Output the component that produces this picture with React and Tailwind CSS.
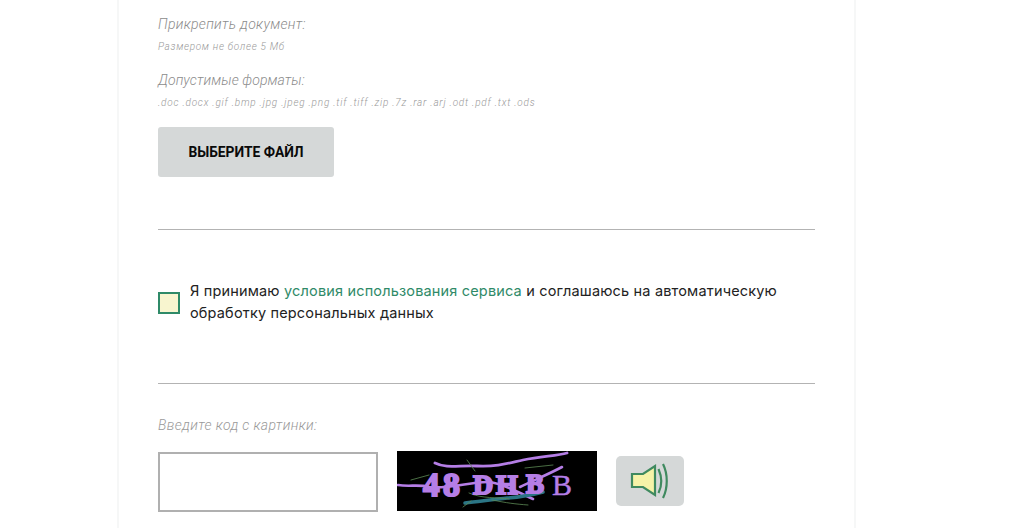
export default function App() {
  const letters = [
    ["4", 26, 45, 33],
    ["8", 46, 45, 34],
    ["D", 76, 43, 28],
    ["H", 99, 43, 28],
    ["B", 129, 42, 27],
  ];
  return (
    <div className="h-[528px] w-[1013px] overflow-hidden bg-white font-['Roboto',sans-serif]">
      <div className="ml-[117px] flex h-[528px] w-[739px] flex-col border-x-2 border-[#f6f7f7] px-[39px]">
        <p className="mt-[15px] text-[14px] leading-[18px] font-light italic tracking-[0.3px] text-[#8c8c8c]">Прикрепить документ:</p>
        <p className="mt-[7px] text-[10px] leading-[14px] font-light italic tracking-[0.7px] text-[#999]">Размером не более 5 Мб</p>
        <p className="mt-[17px] text-[14px] leading-[18px] font-light italic tracking-[0.1px] text-[#8c8c8c]">Допустимые форматы:</p>
        <p className="mt-[7px] text-[10px] leading-[14px] font-light italic tracking-[0.77px] text-[#999]">.doc .docx .gif .bmp .jpg .jpeg .png .tif .tiff .zip .7z .rar .arj .odt .pdf .txt .ods</p>
        <button className="mt-[17px] flex h-[50px] w-[176px] items-center justify-center rounded-[3px] bg-[#d5d8d8] text-[13.8px] font-bold text-[#0a0a0a]">ВЫБЕРИТЕ ФАЙЛ</button>
        <div className="mt-[52px] h-px bg-[#b3b3b3]" />
        <div className="mt-[50px] flex items-center">
          <div className="mt-[2px] h-[22px] w-[22px] shrink-0 border-2 border-[#2f8a68] bg-[#f8f5cf]" />
          <p className="ml-[10px] w-[620px] font-['Inter',sans-serif] text-[14.5px] leading-[22px] tracking-[0.17px] text-[#222]">
            Я принимаю <span className="text-[#2f8a68]">условия использования сервиса</span> и соглашаюсь на автоматическую обработку персональных данных
          </p>
        </div>
        <div className="mt-[59px] h-px bg-[#b3b3b3]" />
        <p className="mt-[32px] text-[14px] leading-[18px] font-light italic tracking-[0.37px] text-[#999]">Введите код с картинки:</p>
        <div className="mt-[17px] flex items-start">
          <div className="mt-px h-[60px] w-[220px] border-2 border-[#b0b0b0] bg-white" />
          <svg className="ml-[19px]" width="200" height="60" viewBox="0 0 200 60">
            <rect width="200" height="60" fill="#000" />
            <g fill="none" strokeLinecap="round">
              <path d="M38 12 C50 18 62 14 80 15 C100 16 112 12 126 9 C145 5 160 5 170 2" stroke="#b57ee6" strokeWidth="2.8" />
              <path d="M1 34 C12 36 22 33 32 36 C55 38 75 30 93 31 C110 34 122 42 136 48" stroke="#b57ee6" strokeWidth="2.6" />
              <path d="M123 36 C135 30 150 24 165 16" stroke="#b57ee6" strokeWidth="2.6" />
              <path d="M68 52 C85 50 100 48 110 47 C125 46 135 44 146 41" stroke="#2b7585" strokeWidth="3.5" />
              <path d="M14 29 L32 24 M70 9 L78 20 M128 17 L156 14 M72 42 C85 48 100 46 112 48 M95 49 C110 52 118 53 131 54 M66 56 L74 50" stroke="#5d8a56" strokeWidth="0.8" />
            </g>
            {letters.map(([c, x, y, s]) => (
              <text key={x} x={x} y={y} fontFamily="'Liberation Serif',serif" fontSize={s} fontWeight="700" fill="#b57ee6" stroke="#b57ee6" strokeWidth="2">{c}</text>
            ))}
            <text x="155" y="44" fontFamily="'Liberation Serif',serif" fontSize="30" fill="#b57ee6" stroke="#b57ee6" strokeWidth="0.4">B</text>
          </svg>
          <div className="ml-[19px] mt-[5px] flex h-[50px] w-[68px] items-center justify-center rounded-[5px] bg-[#d5d8d8]">
            <svg width="40" height="36" viewBox="0 0 40 36" fill="none">
              <path d="M2 11 H13 L25 3 V32 L13 24 H2 Z" fill="#f6f3a8" stroke="#3f8a5f" strokeWidth="2.2" />
              <path d="M28.5 6 C32 14 32 23 28.5 30" stroke="#3f8a5f" strokeWidth="2.2" />
              <path d="M33 1 C38 11 38 25 33 35" stroke="#3f8a5f" strokeWidth="2.2" />
            </svg>
          </div>
        </div>
      </div>
    </div>
  );
}
